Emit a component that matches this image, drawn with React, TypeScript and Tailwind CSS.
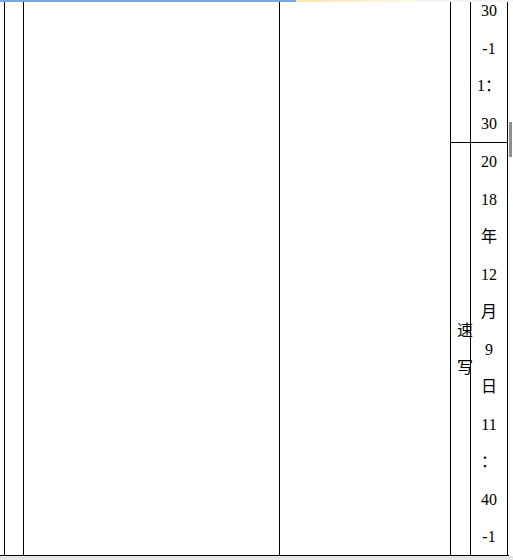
import React from "react";

const row1 = ["30", "-1", "1：", "30"];
const row2 = ["20", "18", "年", "12", "月", "9", "日", "11", "：", "40", "-1"];

export default function App() {
  return (
    <div
      className="w-[513px] h-[560px] bg-white flex flex-col overflow-hidden text-black"
      style={{ fontFamily: '"Liberation Serif", "Noto Sans CJK SC", serif' }}
    >
      {/* top progress strip */}
      <div className="h-[2px] flex shrink-0">
        <div className="w-[296px] bg-[#7aa6da]" />
        <div className="w-[120px] bg-gradient-to-r from-[#f6e6b4] to-[#fdf8ea]" />
        <div className="flex-1 bg-[#f4f4f4]" />
      </div>

      {/* table */}
      <div className="h-[554px] flex shrink-0 border-b border-black w-[509px]">
        <div className="w-[4px] shrink-0" />
        <div className="w-[19px] shrink-0 border-l border-black" />
        <div className="w-[256px] shrink-0 border-l border-black" />
        <div className="w-[171px] shrink-0 border-l border-black" />
        <div className="w-[58px] shrink-0 border-l border-r border-black flex flex-col">
          {/* row 1 */}
          <div className="h-[141px] shrink-0 border-b border-black flex">
            <div className="w-[20px] shrink-0 border-r border-black" />
            <div className="flex-1 flex flex-col justify-end overflow-hidden">
              {row1.map((t, i) => (
                <div key={i} className="h-[37.5px] shrink-0 leading-[37.5px] text-[16px] text-center whitespace-nowrap">
                  {t}
                </div>
              ))}
            </div>
          </div>
          {/* row 2 */}
          <div className="flex-1 flex">
            <div className="w-[20px] shrink-0 border-r border-black flex flex-col justify-center text-[16px] leading-[37px] pl-[6px] whitespace-nowrap">
              <div>速</div>
              <div>写</div>
            </div>
            <div className="flex-1 flex flex-col overflow-hidden">
              {row2.map((t, i) => (
                <div key={i} className="h-[37.5px] shrink-0 leading-[37.5px] text-[16px] text-center whitespace-nowrap">
                  {t}
                </div>
              ))}
            </div>
          </div>
        </div>
        <div className="flex-1 relative">
          <div className="absolute left-[1px] top-[120px] w-[3px] h-[35px] bg-[#8c8c8c]" />
        </div>
      </div>
      <div className="flex-1 bg-[#e6e6e6]" />
    </div>
  );
}
